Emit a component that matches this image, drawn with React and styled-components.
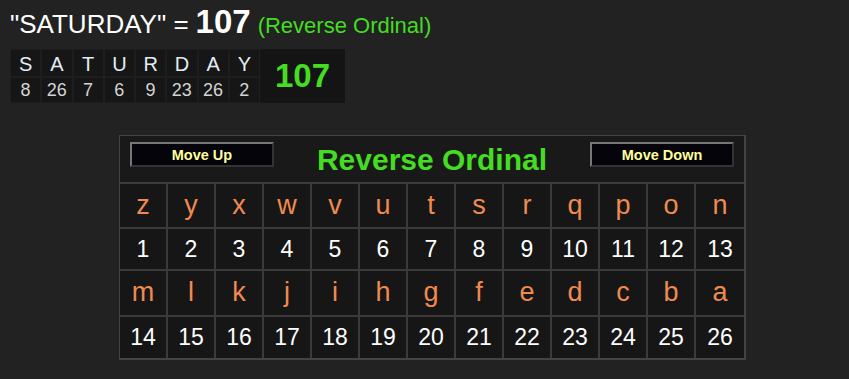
import styled, { createGlobalStyle } from "styled-components";

const GlobalStyle = createGlobalStyle`
  html, body {
    margin: 0;
    background: #222222;
    font-family: "Liberation Sans", Arial, sans-serif;
  }
`;

const Page = styled.div`
  padding: 5px 10px;
  width: 849px;
  height: 379px;
  box-sizing: border-box;
`;

const Heading = styled.div`
  color: #ffffff;
  font-size: 26px;
  line-height: 34px;
  display: flex;
  align-items: baseline;
  gap: 7px;
`;

const Total = styled.b`
  font-size: 33px;
`;

const Cipher = styled.span`
  color: #44dd22;
  font-size: 22px;
`;

const Breakdown = styled.div`
  display: flex;
  margin-top: 6px;
  width: fit-content;
  background: #161616;
`;

const Letters = styled.div`
  display: grid;
  grid-template-columns: repeat(8, 31.25px);
  grid-template-rows: 28px 26px;
`;

const MiniCell = styled.div`
  display: flex;
  align-items: center;
  justify-content: center;
  border: 1px solid #1e1e1e;
  color: ${(p) => (p.$num ? "#d4d4d4" : "#e4ecf4")};
  font-size: ${(p) => (p.$num ? "18px" : "20px")};
  padding-top: ${(p) => (p.$num ? "0" : "2px")};
`;

const Sum = styled.div`
  width: 85px;
  display: flex;
  align-items: center;
  justify-content: center;
  color: #44dd22;
  font-size: 33px;
  font-weight: bold;
  background: #141414;
`;

const Board = styled.div`
  margin: 32px 0 0 109px;
  width: 624px;
  border: 1px solid #444;
  border-right-width: 2px;
  border-bottom-width: 2px;
  background: #161616;
`;

const BoardHead = styled.div`
  height: 46px;
  display: flex;
  align-items: center;
  justify-content: space-between;
  padding: 0 10px;
  border-bottom: 2px solid #3c3c3c;
  background: #191919;
`;

const Title = styled.div`
  color: #44dd22;
  font-size: 30px;
  font-weight: bold;
  margin-top: 2px;
`;

const MoveButton = styled.button`
  width: 144px;
  height: 25px;
  margin-top: -9px;
  background: #04040a;
  color: #ffff99;
  font-family: "Liberation Sans", Arial, sans-serif;
  font-size: 14.5px;
  font-weight: bold;
  border: 2px solid;
  border-color: #777 #333 #333 #777;
  padding: 0;
`;

const Grid = styled.div`
  display: grid;
  grid-template-columns: repeat(13, 1fr);
  grid-template-rows: 45px 42px 46px 41px;
`;

const Cell = styled.div`
  display: flex;
  align-items: center;
  justify-content: center;
  border-right: 2px solid #3a3a3a;
  border-bottom: 2px solid #3a3a3a;
  color: ${(p) => (p.$num ? "#ffffff" : "#f08a4f")};
  font-size: ${(p) => (p.$num ? "23px" : "27px")};
  padding-bottom: ${(p) => (p.$num ? "0" : "1px")};
  &:nth-child(13n) {
    border-right: none;
  }
  &:nth-child(n + 40) {
    border-bottom: none;
  }
`;

const word = "SATURDAY";
const reverse = (ch) => 27 - (ch.toLowerCase().charCodeAt(0) - 96);

const alphabet = "zyxwvutsrqponmlkjihgfedcba".split("");

const App = () => {
  const values = word.split("").map(reverse);
  const sum = values.reduce((a, b) => a + b, 0);
  const rows = [alphabet.slice(0, 13), alphabet.slice(13)];

  return (
    <Page>
      <GlobalStyle />
      <Heading>
        <span>"{word}" =</span>
        <Total>{sum}</Total>
        <Cipher>(Reverse Ordinal)</Cipher>
      </Heading>
      <Breakdown>
        <Letters>
          {word.split("").map((ch, i) => (
            <MiniCell key={"l" + i}>{ch}</MiniCell>
          ))}
          {values.map((v, i) => (
            <MiniCell key={"n" + i} $num>
              {v}
            </MiniCell>
          ))}
        </Letters>
        <Sum>{sum}</Sum>
      </Breakdown>
      <Board>
        <BoardHead>
          <MoveButton>Move Up</MoveButton>
          <Title>Reverse Ordinal</Title>
          <MoveButton>Move Down</MoveButton>
        </BoardHead>
        <Grid>
          {rows.map((row, r) => [
            ...row.map((ch) => <Cell key={ch}>{ch}</Cell>),
            ...row.map((ch, i) => (
              <Cell key={ch + "n"} $num>
                {r * 13 + i + 1}
              </Cell>
            )),
          ])}
        </Grid>
      </Board>
    </Page>
  );
};

export default App;
